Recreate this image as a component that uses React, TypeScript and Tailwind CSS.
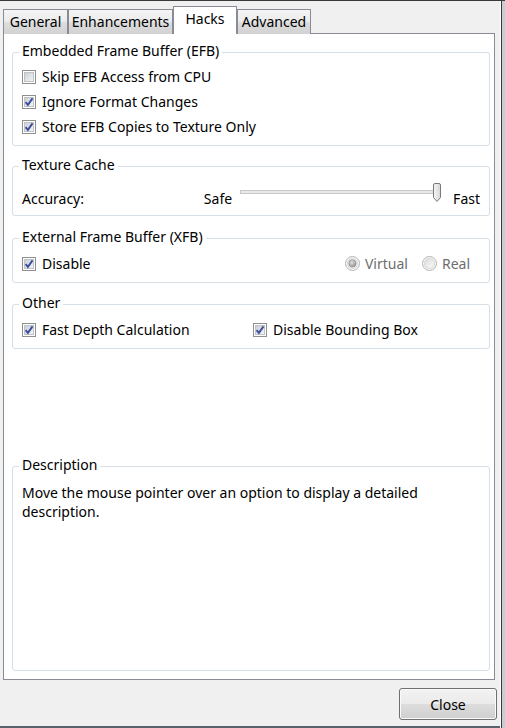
import React from "react";

function CheckBox({ checked }: { checked: boolean }) {
  return (
    <svg width="14" height="14" viewBox="0 0 14 14" className="shrink-0">
      <defs>
        <linearGradient id="cbfill" x1="0" y1="0" x2="1" y2="1">
          <stop offset="0" stopColor="#c9cdd3" />
          <stop offset="1" stopColor="#f6f6f6" />
        </linearGradient>
      </defs>
      <rect x="0.5" y="0.5" width="13" height="13" fill="#ffffff" stroke="#8e8f8f" />
      <rect x="2.5" y="2.5" width="9" height="9" fill="url(#cbfill)" stroke="#bfc3c8" />
      {checked && (
        <path
          d="M3.6 7.1 L5.9 9.9 L10.5 3.4"
          fill="none"
          stroke="#3b4f9c"
          strokeWidth="1.9"
          strokeLinejoin="miter"
        />
      )}
    </svg>
  );
}

function Radio({ selected, className }: { selected: boolean; className?: string }) {
  return (
    <svg width="15" height="15" viewBox="0 0 15 15" className={"shrink-0 " + (className ?? "")}>
      <defs>
        <linearGradient id="rdfill" x1="0" y1="0" x2="1" y2="1">
          <stop offset="0" stopColor="#dcdcdc" />
          <stop offset="1" stopColor="#fbfbfb" />
        </linearGradient>
        <radialGradient id="rddot" cx="0.4" cy="0.35" r="0.7">
          <stop offset="0" stopColor="#e2e2e2" />
          <stop offset="1" stopColor="#8c8c8c" />
        </radialGradient>
      </defs>
      <circle cx="7.5" cy="7.5" r="7" fill="#f7f7f7" stroke="#b4b4b4" />
      <circle cx="7.5" cy="7.5" r="5" fill="url(#rdfill)" stroke="#d6d6d6" />
      {selected && <circle cx="7.5" cy="7.5" r="3.6" fill="url(#rddot)" stroke="#9a9a9a" strokeWidth="0.8" />}
    </svg>
  );
}

function Slider() {
  return (
    <svg width="202" height="20" viewBox="0 0 202 20" className="shrink-0 self-start mt-[1px]">
      <defs>
        <linearGradient id="thumb" x1="0" y1="0" x2="1" y2="0">
          <stop offset="0" stopColor="#f6f6f6" />
          <stop offset="1" stopColor="#d6d6d6" />
        </linearGradient>
      </defs>
      <rect x="0.5" y="7.5" width="197" height="3" fill="#e7eaea" stroke="#c8c8c8" />
      <path
        d="M193.5 2 Q193.5 0.5 195 0.5 H199 Q200.5 0.5 200.5 2 V14.5 L197 18.5 L193.5 14.5 Z"
        fill="url(#thumb)"
        stroke="#7a7a7a"
      />
    </svg>
  );
}

function Group({
  title,
  className,
  children,
}: {
  title: string;
  className: string;
  children?: React.ReactNode;
}) {
  return (
    <div className={"relative ml-[8px] w-[478px] shrink-0 rounded-[3px] border border-[#d5dfe5] " + className}>
      <span className="absolute left-[6px] -top-[10px] bg-white px-[3px] leading-[16px] text-black">{title}</span>
      {children}
    </div>
  );
}

function CheckRow({ checked, label }: { checked: boolean; label: string }) {
  return (
    <div className="flex h-[25px] items-center gap-[6px]">
      <CheckBox checked={checked} />
      <span className="leading-[19px]">{label}</span>
    </div>
  );
}

const tabBase =
  "flex justify-center border-l border-t border-r border-[#898c95] shrink-0 leading-[20px]";
const tabIdle =
  tabBase +
  " h-[25px] pt-[2px] bg-[linear-gradient(to_bottom,#f4f4f4_0%,#ececec_45%,#dcdcdc_55%,#d2d2d2_100%)]";

export default function App() {
  return (
    <div
      className="flex h-[728px] w-[505px] overflow-hidden border-t border-[#3a3a3a] bg-[#f0f0f0] text-[14px] text-black"
      style={{ fontFamily: '"Noto Sans", "Open Sans", sans-serif' }}
    >
      <div className="flex w-[501px] shrink-0 flex-col border-r border-white">
        {/* Tabs */}
        <div className="relative -mb-[1px] flex shrink-0 items-end pl-[3px] pt-[5px]">
          <div className={tabIdle + " w-[65px]"}>General</div>
          <div className={tabIdle + " w-[105px]"}>Enhancements</div>
          <div className={tabBase + " relative z-10 h-[28px] w-[64px] bg-white pt-[2px]"}>Hacks</div>
          <div className={tabIdle + " w-[74px]"}>Advanced</div>
        </div>

        {/* Panel */}
        <div className="ml-[3px] flex h-[647px] w-[492px] shrink-0 flex-col border border-[#898c95] bg-white">
          <Group title="Embedded Frame Buffer (EFB)" className="mt-[18px] h-[94px] pl-[9px] pt-[11px]">
            <CheckRow checked={false} label="Skip EFB Access from CPU" />
            <CheckRow checked={true} label="Ignore Format Changes" />
            <CheckRow checked={true} label="Store EFB Copies to Texture Only" />
          </Group>

          <Group title="Texture Cache" className="mt-[20px] h-[50px] pl-[9px] pr-[9px] pt-[15px]">
            <div className="flex h-[32px] items-center">
              <span className="leading-[19px]">Accuracy:</span>
              <div className="ml-auto flex h-[32px] items-center">
                <span className="leading-[19px]">Safe</span>
                <div className="ml-[8px] flex h-[32px]">
                  <Slider />
                </div>
                <span className="ml-[11px] leading-[19px]">Fast</span>
              </div>
            </div>
          </Group>

          <Group title="External Frame Buffer (XFB)" className="mt-[22px] h-[45px] pl-[9px] pr-[19px] pt-[12px]">
            <div className="flex h-[25px] items-center">
              <CheckBox checked={true} />
              <span className="ml-[6px] leading-[19px]">Disable</span>
              <div className="ml-auto flex items-center">
                <Radio selected={true} />
                <span className="ml-[5px] leading-[19px] text-[#6d6d6d]">Virtual</span>
                <Radio selected={false} className="ml-[14px]" />
                <span className="ml-[5px] leading-[19px] text-[#6d6d6d]">Real</span>
              </div>
            </div>
          </Group>

          <Group title="Other" className="mt-[21px] h-[45px] pl-[9px] pt-[12px]">
            <div className="flex h-[25px] items-center">
              <div className="flex w-[231px] items-center gap-[6px]">
                <CheckBox checked={true} />
                <span className="leading-[19px]">Fast Depth Calculation</span>
              </div>
              <div className="flex items-center gap-[6px]">
                <CheckBox checked={true} />
                <span className="leading-[19px]">Disable Bounding Box</span>
              </div>
            </div>
          </Group>

          <Group title="Description" className="mt-[117px] h-[205px] pl-[9px] pt-[16px]">
            <p className="leading-[19px]">
              Move the mouse pointer over an option to display a detailed
              <br />
              description.
            </p>
          </Group>
        </div>

        {/* Button row */}
        <div className="mt-[8px] flex shrink-0 justify-end pr-[3px]">
          <button className="flex h-[32px] w-[98px] items-center justify-center rounded-[3px] border border-[#707070] bg-[linear-gradient(to_bottom,#f2f2f2_0%,#ebebeb_50%,#dddddd_50%,#cfcfcf_100%)] leading-[19px] shadow-[inset_0_0_0_1px_#fbfbfb]">
            Close
          </button>
        </div>

        <div className="mt-auto h-[2px] shrink-0 bg-[#59616b]" />
      </div>
      <div className="w-[4px] shrink-0 border-l border-[#3a3a3a] bg-[#c6cdd5]" />
    </div>
  );
}
